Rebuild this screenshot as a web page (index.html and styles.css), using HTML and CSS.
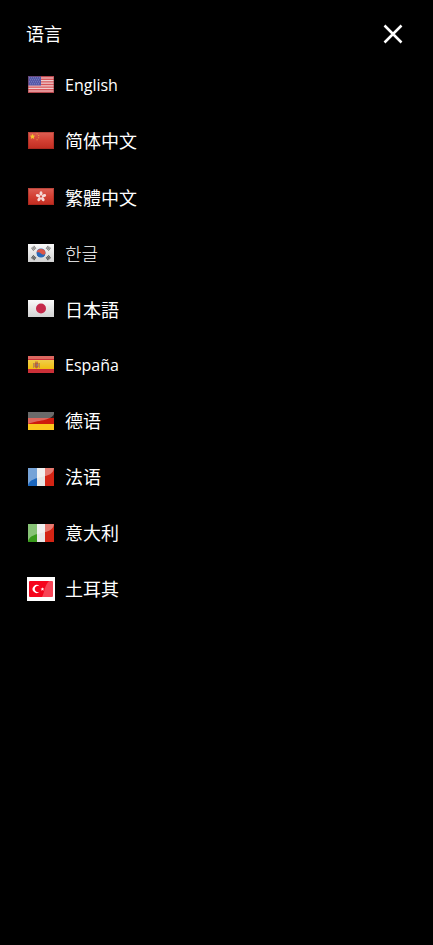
FILE: index.html
```html
<!DOCTYPE html>
<html lang="zh-CN">
<head>
    <meta charset="UTF-8">
    <meta name="viewport" content="width=device-width, initial-scale=1.0">
    <title>语言</title>
    <link rel="stylesheet" href="styles.css">
</head>
<body>
    <!-- Shared gradients for the flags -->
    <svg class="defs" aria-hidden="true">
        <defs>
            <linearGradient id="red" x1="0" y1="0" x2="0" y2="1">
                <stop offset="0" stop-color="#dc6055"/>
                <stop offset="0.5" stop-color="#d34033"/>
                <stop offset="1" stop-color="#c02c20"/>
            </linearGradient>
            <linearGradient id="white" x1="0" y1="0" x2="0" y2="1">
                <stop offset="0" stop-color="#fafafa"/>
                <stop offset="1" stop-color="#d2d2d2"/>
            </linearGradient>
            <linearGradient id="yellow" x1="0" y1="0" x2="0" y2="1">
                <stop offset="0" stop-color="#f0cf4a"/>
                <stop offset="1" stop-color="#f0bd10"/>
            </linearGradient>
        </defs>
    </svg>

    <header class="header">
        <h1>语言</h1>
        <button type="button" class="close" aria-label="关闭">
            <svg width="20" height="20" viewBox="0 0 20 20">
                <path d="M1.5 1.5L18.5 18.5M18.5 1.5L1.5 18.5" stroke="#fff" stroke-width="2.5" fill="none"/>
            </svg>
        </button>
    </header>

    <nav>
        <ul class="lang-list">
            <li><a href="#en" lang="en">
                <svg class="flag" viewBox="0 0 26 18">
                    <rect width="26" height="17" fill="#efcfcf"/>
                    <path d="M0 .7h26M0 3.3h26M0 5.9h26M0 8.5h26M0 11.1h26M0 13.7h26M0 16.3h26" stroke="#d8555a" stroke-width="1.4"/>
                    <rect width="13" height="9.5" fill="#5257a8"/>
                    <path d="M1 1.8h11M2 3.8h10M1 5.8h11M2 7.8h10" stroke="#8b8fcb" stroke-width=".8" stroke-dasharray="1 1"/>
                    <path d="M.5 .5h25v16h-25z" fill="none" stroke="#8a3038" stroke-opacity=".4"/>
                </svg>
                <span>English</span>
            </a></li>
            <li><a href="#zh-cn" lang="zh-CN">
                <svg class="flag" viewBox="0 0 26 18">
                    <rect width="26" height="17" fill="url(#red)"/>
                    <path d="M4.5 1.8l.8 1.7 1.9.2-1.4 1.3.4 1.9-1.7-.9-1.7.9.4-1.9-1.4-1.3 1.9-.2z" fill="#f5c62c"/>
                    <path d="M8.5 1.2h1.2v1h-1.2zM10 3h1.2v1H10zM10 5.3h1.2v1H10zM8.5 7.2h1.2v1h-1.2z" fill="#e8943a"/>
                    <path d="M.5 .5h25v16h-25z" fill="none" stroke="#8a2018" stroke-opacity=".4"/>
                </svg>
                <span>简体中文</span>
            </a></li>
            <li><a href="#zh-tw" lang="zh-TW">
                <svg class="flag" viewBox="0 0 26 18">
                    <rect width="26" height="17" fill="url(#red)"/>
                    <g fill="#f5d9d6">
                        <ellipse cx="13" cy="5.5" rx="1.5" ry="2.3"/>
                        <ellipse cx="13" cy="5.5" rx="1.5" ry="2.3" transform="rotate(72 13 8.6)"/>
                        <ellipse cx="13" cy="5.5" rx="1.5" ry="2.3" transform="rotate(144 13 8.6)"/>
                        <ellipse cx="13" cy="5.5" rx="1.5" ry="2.3" transform="rotate(216 13 8.6)"/>
                        <ellipse cx="13" cy="5.5" rx="1.5" ry="2.3" transform="rotate(288 13 8.6)"/>
                    </g>
                    <path d="M.5 .5h25v16h-25z" fill="none" stroke="#8a2018" stroke-opacity=".4"/>
                </svg>
                <span>繁體中文</span>
            </a></li>
            <li><a href="#ko" lang="ko">
                <svg class="flag" viewBox="0 0 26 18">
                    <rect width="26" height="18" fill="url(#white)"/>
                    <circle cx="13" cy="9" r="4.5" fill="#2868b8"/>
                    <path d="M8.6 8.5a4.5 4.5 0 0 1 8.9 1c-1.5 2-3.5 1-4.5 0s-3-1.5-4.4-1z" fill="#de5748"/>
                    <g fill="none" stroke-width="3.6" stroke-dasharray="1 .5">
                        <path d="M4.2 5.5l3-2.5M18.8 3l3 2.5" stroke="#777"/>
                        <path d="M4.2 12.5l3 2.5M18.8 15l3-2.5" stroke="#444"/>
                    </g>
                </svg>
                <span>한글</span>
            </a></li>
            <li><a href="#ja" lang="ja">
                <svg class="flag" viewBox="0 0 26 18">
                    <rect width="26" height="17" fill="url(#white)"/>
                    <circle cx="13" cy="8.5" r="5" fill="#c52a4b"/>
                </svg>
                <span>日本語</span>
            </a></li>
            <li><a href="#es" lang="es">
                <svg class="flag" viewBox="0 0 26 18">
                    <rect width="26" height="17" fill="#cb3038"/>
                    <rect width="26" height="3" fill="#dc6860"/>
                    <rect y="4" width="26" height="9" fill="url(#yellow)"/>
                    <path d="M5 7h1v5H5zM11 7h1v5h-1z" fill="#b88c50"/>
                    <path d="M6.5 7h4v4l-2 1.5-2-1.5z" fill="#b5653c"/>
                    <path d="M7 5.5h3v1.5H7z" fill="#c8803c"/>
                    <path d="M8.5 8h1.5v2H8.5z" fill="#8d7b84"/>
                </svg>
                <span>España</span>
            </a></li>
            <li><a href="#de" lang="zh-CN">
                <svg class="flag" viewBox="0 0 26 18">
                    <rect width="26" height="6" fill="#222"/>
                    <rect y="6" width="26" height="6" fill="#cf1b0c"/>
                    <rect y="12" width="26" height="6" fill="#fcc71c"/>
                    <path d="M0 0h26v2c-3 7-17 6-26 10z" fill="#fff" fill-opacity=".33"/>
                </svg>
                <span>德语</span>
            </a></li>
            <li><a href="#fr" lang="zh-CN">
                <svg class="flag" viewBox="0 0 26 18">
                    <rect width="9" height="18" fill="#1b66bd"/>
                    <rect x="9" width="8" height="18" fill="#e6e6e6"/>
                    <rect x="17" width="9" height="18" fill="#d42414"/>
                    <path d="M0 0h26c-1 12-22 6-26 17z" fill="#fff" fill-opacity=".4"/>
                </svg>
                <span>法语</span>
            </a></li>
            <li><a href="#it" lang="zh-CN">
                <svg class="flag" viewBox="0 0 26 18">
                    <rect width="9" height="18" fill="#38991b"/>
                    <rect x="9" width="8" height="18" fill="#e6e6e6"/>
                    <rect x="17" width="9" height="18" fill="#d42414"/>
                    <path d="M0 0h26c-1 12-22 6-26 17z" fill="#fff" fill-opacity=".4"/>
                </svg>
                <span>意大利</span>
            </a></li>
            <li><a href="#tr" lang="zh-CN">
                <svg class="flag flag-framed" viewBox="0 0 28 24">
                    <rect width="28" height="24" fill="#fff"/>
                    <rect x="2" y="4" width="24" height="16" rx="1" fill="#f5051c"/>
                    <path d="M26 4v16h-11c3-5 2-11 7-16z" fill="#fff" fill-opacity=".25"/>
                    <path d="M12.5 9.2a4 4 0 1 0 0 5.6 3.2 3.2 0 1 1 0-5.6z" fill="#fff"/>
                    <path d="M15.5 10.2l.5 1.2 1.3.1-1 .9.3 1.3-1.1-.7-1.2.7.3-1.3-1-.9 1.4-.1z" fill="#fff"/>
                </svg>
                <span>土耳其</span>
            </a></li>
        </ul>
    </nav>
</body>
</html>
```
FILE: styles.css
```css
* {
    margin: 0;
    padding: 0;
    box-sizing: border-box;
}

body {
    font-family: "Open Sans", "Noto Sans CJK SC", sans-serif;
    font-size: 18px;
    line-height: 24px;
    color: #fff;
    background-color: #000;
    min-height: 100vh;
}

.defs {
    position: absolute;
    width: 0;
    height: 0;
}

/* Header */
.header {
    display: flex;
    justify-content: space-between;
    align-items: center;
    padding: 20px 30px 9px 26px;
}

h1 {
    font-size: 18px;
    font-weight: normal;
}

.close {
    display: flex;
    padding: 4px 0;
    border: none;
    background: none;
    cursor: pointer;
}

/* Languages */
.lang-list {
    list-style: none;
}

.lang-list a {
    display: flex;
    align-items: center;
    height: 56px;
    padding: 0 28px;
    gap: 11px;
    color: #fff;
    text-decoration: none;
}

.lang-list a:lang(en),
.lang-list a:lang(es) {
    font-size: 16px;
}

.lang-list a:lang(ko) {
    font-family: "Noto Sans CJK KR", sans-serif;
    font-weight: 300;
}

.lang-list a:lang(ja) {
    font-family: "Noto Sans CJK JP", sans-serif;
}

.lang-list a:lang(zh-TW) {
    font-family: "Noto Sans CJK TC", sans-serif;
}

.flag {
    flex: none;
    width: 26px;
    height: 18px;
}

/* White frame sticks out past the flag column */
.flag-framed {
    width: 28px;
    height: 24px;
    margin: 0 -1px;
}
```
